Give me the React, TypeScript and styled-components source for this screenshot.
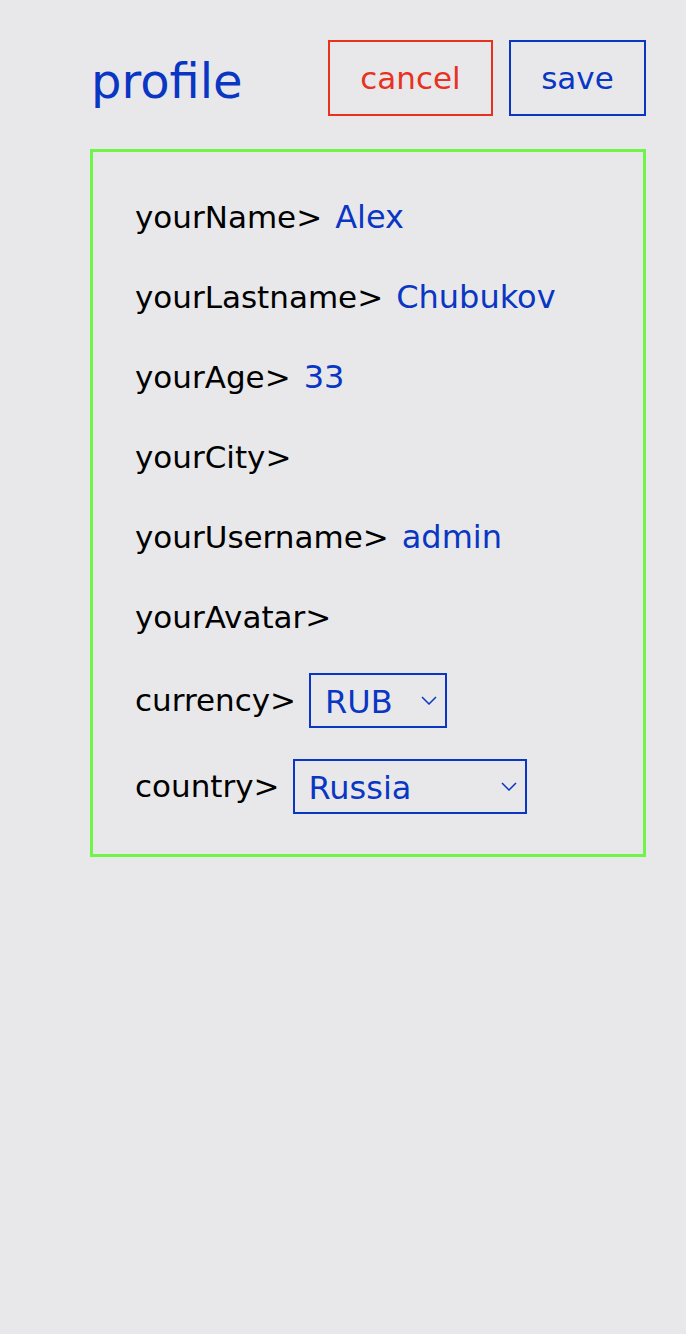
import styled, { createGlobalStyle } from "styled-components";
import { useState } from "react";

const GlobalStyle = createGlobalStyle`
  html, body {
    margin: 0;
    padding: 0;
    background-color: #e8e8eb;
    font-family: "DejaVu Sans", Verdana, sans-serif;
  }
`;

const blue = "#0a36c4";

const Page = styled.div`
  min-height: 1334px;
  padding: 40px 40px 0 90px;
  box-sizing: border-box;
`;

const Header = styled.div`
  display: flex;
  justify-content: space-between;
  align-items: center;
  width: 556px;
`;

const Title = styled.h1`
  margin: 5px 0 0 1px;
  font-size: 48px;
  font-weight: normal;
  color: ${blue};
`;

const Buttons = styled.div`
  display: flex;
  gap: 16px;
`;

const Button = styled.button<{ $color: string; $width: number }>`
  width: ${(p) => p.$width}px;
  height: 76px;
  background: transparent;
  border: 2px solid ${(p) => p.$color};
  color: ${(p) => p.$color};
  font-family: inherit;
  font-size: 31px;
  padding: 0;
`;

const Card = styled.div`
  margin-top: 33px;
  width: 556px;
  box-sizing: border-box;
  border: 3px solid #6ff54a;
  padding: 25px 0 25px 42px;
  display: flex;
  flex-direction: column;
`;

const Row = styled.div`
  height: 80px;
  display: flex;
  align-items: center;
  font-size: 31px;
  color: #000;
`;

const SelectRow = styled(Row)`
  height: 86px;
`;

const Value = styled.span`
  color: ${blue};
  font-size: 32px;
  margin-left: 13px;
`;

const Select = styled.select<{ $width: number }>`
  margin-left: 13px;
  width: ${(p) => p.$width}px;
  height: 55px;
  border: 2px solid ${blue};
  border-radius: 0;
  background: transparent;
  color: ${blue};
  font-family: inherit;
  font-size: 32px;
  padding: 3px 0 0 14px;
  appearance: none;
  background-image: url("data:image/svg+xml;utf8,<svg xmlns='http://www.w3.org/2000/svg' width='16' height='9' viewBox='0 0 16 9'><path d='M1 1l7 7 7-7' fill='none' stroke='%230a36c4' stroke-width='1.5'/></svg>");
  background-repeat: no-repeat;
  background-position: right 8px center;
`;

export default function App() {
  const [currency, setCurrency] = useState("RUB");
  const [country, setCountry] = useState("Russia");
  const fields: [string, string][] = [
    ["yourName", "Alex"],
    ["yourLastname", "Chubukov"],
    ["yourAge", "33"],
    ["yourCity", ""],
    ["yourUsername", "admin"],
    ["yourAvatar", ""],
  ];

  return (
    <Page>
      <GlobalStyle />
      <Header>
        <Title>profile</Title>
        <Buttons>
          <Button $color="#e8321f" $width={165}>cancel</Button>
          <Button $color={blue} $width={137}>save</Button>
        </Buttons>
      </Header>
      <Card>
        {fields.map(([label, value]) => (
          <Row key={label}>
            {label}&gt;
            {value ? <Value>{value}</Value> : null}
          </Row>
        ))}
        <SelectRow>
          currency&gt;
          <Select $width={138} value={currency} onChange={(e) => setCurrency(e.target.value)}>
            <option>RUB</option>
            <option>USD</option>
            <option>EUR</option>
          </Select>
        </SelectRow>
        <SelectRow>
          country&gt;
          <Select $width={234} value={country} onChange={(e) => setCountry(e.target.value)}>
            <option>Russia</option>
            <option>USA</option>
          </Select>
        </SelectRow>
      </Card>
    </Page>
  );
}
